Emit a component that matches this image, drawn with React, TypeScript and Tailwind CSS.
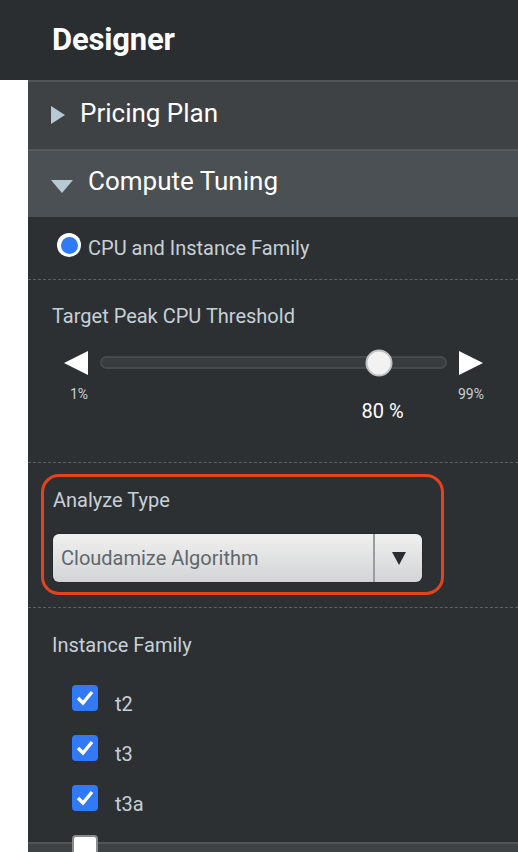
import { useState } from "react";

const families = [
  { name: "t2", checked: true },
  { name: "t3", checked: true },
  { name: "t3a", checked: true },
  { name: "", checked: false },
];

function Dashed() {
  return <div className="border-t border-dashed border-[#5b6064]" />;
}

export default function App() {
  const [value] = useState(80);
  const pct = (value - 1) / 98;

  return (
    <div className="h-[852px] w-[518px] overflow-hidden bg-white font-['Roboto',sans-serif]">
      {/* Header */}
      <div className="flex h-[80px] items-center bg-[#2b2e31] pl-[52px]">
        <h1 className="text-[31px] font-bold tracking-[-0.2px] text-white">Designer</h1>
      </div>

      <div className="ml-[28px] h-[772px] overflow-hidden bg-[#2d3033]">
        {/* Pricing Plan */}
        <div className="flex h-[69px] items-center border-t-2 border-[#50555a] bg-[#3e4245] pb-[5px] pl-[23px]">
          <svg width="14" height="18" viewBox="0 0 14 18" className="mr-[15px] mt-[4px]">
            <path d="M0 0 L14 9 L0 18 Z" fill="#b7cad4" />
          </svg>
          <span className="text-[26px] text-white">Pricing Plan</span>
        </div>

        {/* Compute Tuning */}
        <div className="flex h-[68px] items-center border-t-2 border-[#54595d] bg-[#4a5054] pb-[5px] pl-[23px]">
          <svg width="22" height="13" viewBox="0 0 22 13" className="mr-[15px] mt-[10px]">
            <path d="M0 0 L22 0 L11 13 Z" fill="#b7cad4" />
          </svg>
          <span className="text-[26px] text-white">Compute Tuning</span>
        </div>

        {/* Radio */}
        <div className="flex h-[62px] items-center pl-[29px]">
          <span className="-mt-[6px] flex h-[24px] w-[24px] items-center justify-center rounded-full bg-white">
            <span className="h-[17px] w-[17px] rounded-full bg-[#2f7af6]" />
          </span>
          <span className="ml-[7px] text-[20px] text-[#c6d0d6]">CPU and Instance Family</span>
        </div>
        <Dashed />

        {/* Threshold */}
        <div className="h-[182px] px-[24px] pt-[21px]">
          <div className="text-[20px] text-[#c6d0d6]">Target Peak CPU Threshold</div>
          <div className="mt-[20px] flex items-start">
            <div className="flex w-[48px] flex-col items-center">
              <svg width="24" height="24" viewBox="0 0 24 24">
                <path d="M24 0 L24 24 L0 12 Z" fill="#ffffff" />
              </svg>
              <span className="ml-[6px] mt-[9px] text-[14px] text-[#c6d0d6]">1%</span>
            </div>
            <div className="relative mt-[5px] h-[13px] w-[347px] rounded-full border-2 border-[#454a4e] bg-[#383c3f]">
              <span
                className="absolute top-1/2 h-[27px] w-[27px] -translate-x-1/2 -translate-y-1/2 rounded-full border-2 border-[#bfc2c4] bg-[#f2f2f2]"
                style={{ left: `${pct * 100}%` }}
              />
              <span
                className="absolute top-[38px] ml-[4px] -translate-x-1/2 text-[20px] text-white"
                style={{ left: `${pct * 100}%` }}
              >
                {value} %
              </span>
            </div>
            <div className="ml-[12px] flex w-[24px] flex-col items-center">
              <svg width="24" height="24" viewBox="0 0 24 24">
                <path d="M0 0 L24 12 L0 24 Z" fill="#ffffff" />
              </svg>
              <span className="mt-[9px] text-[14px] text-[#c6d0d6]">99%</span>
            </div>
          </div>
        </div>
        <Dashed />

        {/* Analyze Type */}
        <div className="h-[144px] pl-[13px] pt-[11px]">
          <div className="h-[121px] w-[403px] rounded-[18px] border-[3px] border-[#e4431f] pl-[9px] pt-[8px]">
            <div className="text-[20px] text-[#c6d0d6]">Analyze Type</div>
            <div className="mt-[19px] flex h-[48px] w-[369px] items-center rounded-[6px] bg-gradient-to-b from-[#f0f0f0] to-[#d3d4d6] shadow-[0_0_0_1px_#26292b]">
              <span className="flex-1 pl-[8px] text-[20px] text-[#5f676c]">Cloudamize Algorithm</span>
              <span className="h-full w-[2px] bg-[#9a9da0]" />
              <span className="flex w-[47px] justify-center">
                <svg width="14" height="14" viewBox="0 0 14 14">
                  <path d="M0 1 L14 1 L7 14 Z" fill="#2b2e31" />
                </svg>
              </span>
            </div>
          </div>
        </div>
        <Dashed />

        {/* Instance Family */}
        <div className="h-[234px] pl-[24px] pt-[22px]">
          <div className="text-[20px] text-[#c6d0d6]">Instance Family</div>
          <div className="mt-[25px] flex flex-col gap-[25px] pl-[20px]">
            {families.map((f, i) => (
              <div key={i} className="flex h-[25px] items-start">
                {f.checked ? (
                  <span className="flex h-[26px] w-[26px] items-center justify-center rounded-[4px] bg-[#3279f6]">
                    <svg width="18" height="16" viewBox="0 0 18 16">
                      <path d="M2 8 L7 13 L16 2" stroke="#ffffff" strokeWidth="3.4" fill="none" />
                    </svg>
                  </span>
                ) : (
                  <span className="h-[26px] w-[26px] rounded-[4px] border-2 border-[#8a8d90] bg-white" />
                )}
                {f.name && (
                  <span className="ml-[17px] mt-[4px] text-[20px] text-[#c6d0d6]">{f.name}</span>
                )}
              </div>
            ))}
          </div>
        </div>

        {/* Next section */}
        <div className="h-[20px] border-t-2 border-[#50555a] bg-[#3e4245]" />
      </div>
    </div>
  );
}
